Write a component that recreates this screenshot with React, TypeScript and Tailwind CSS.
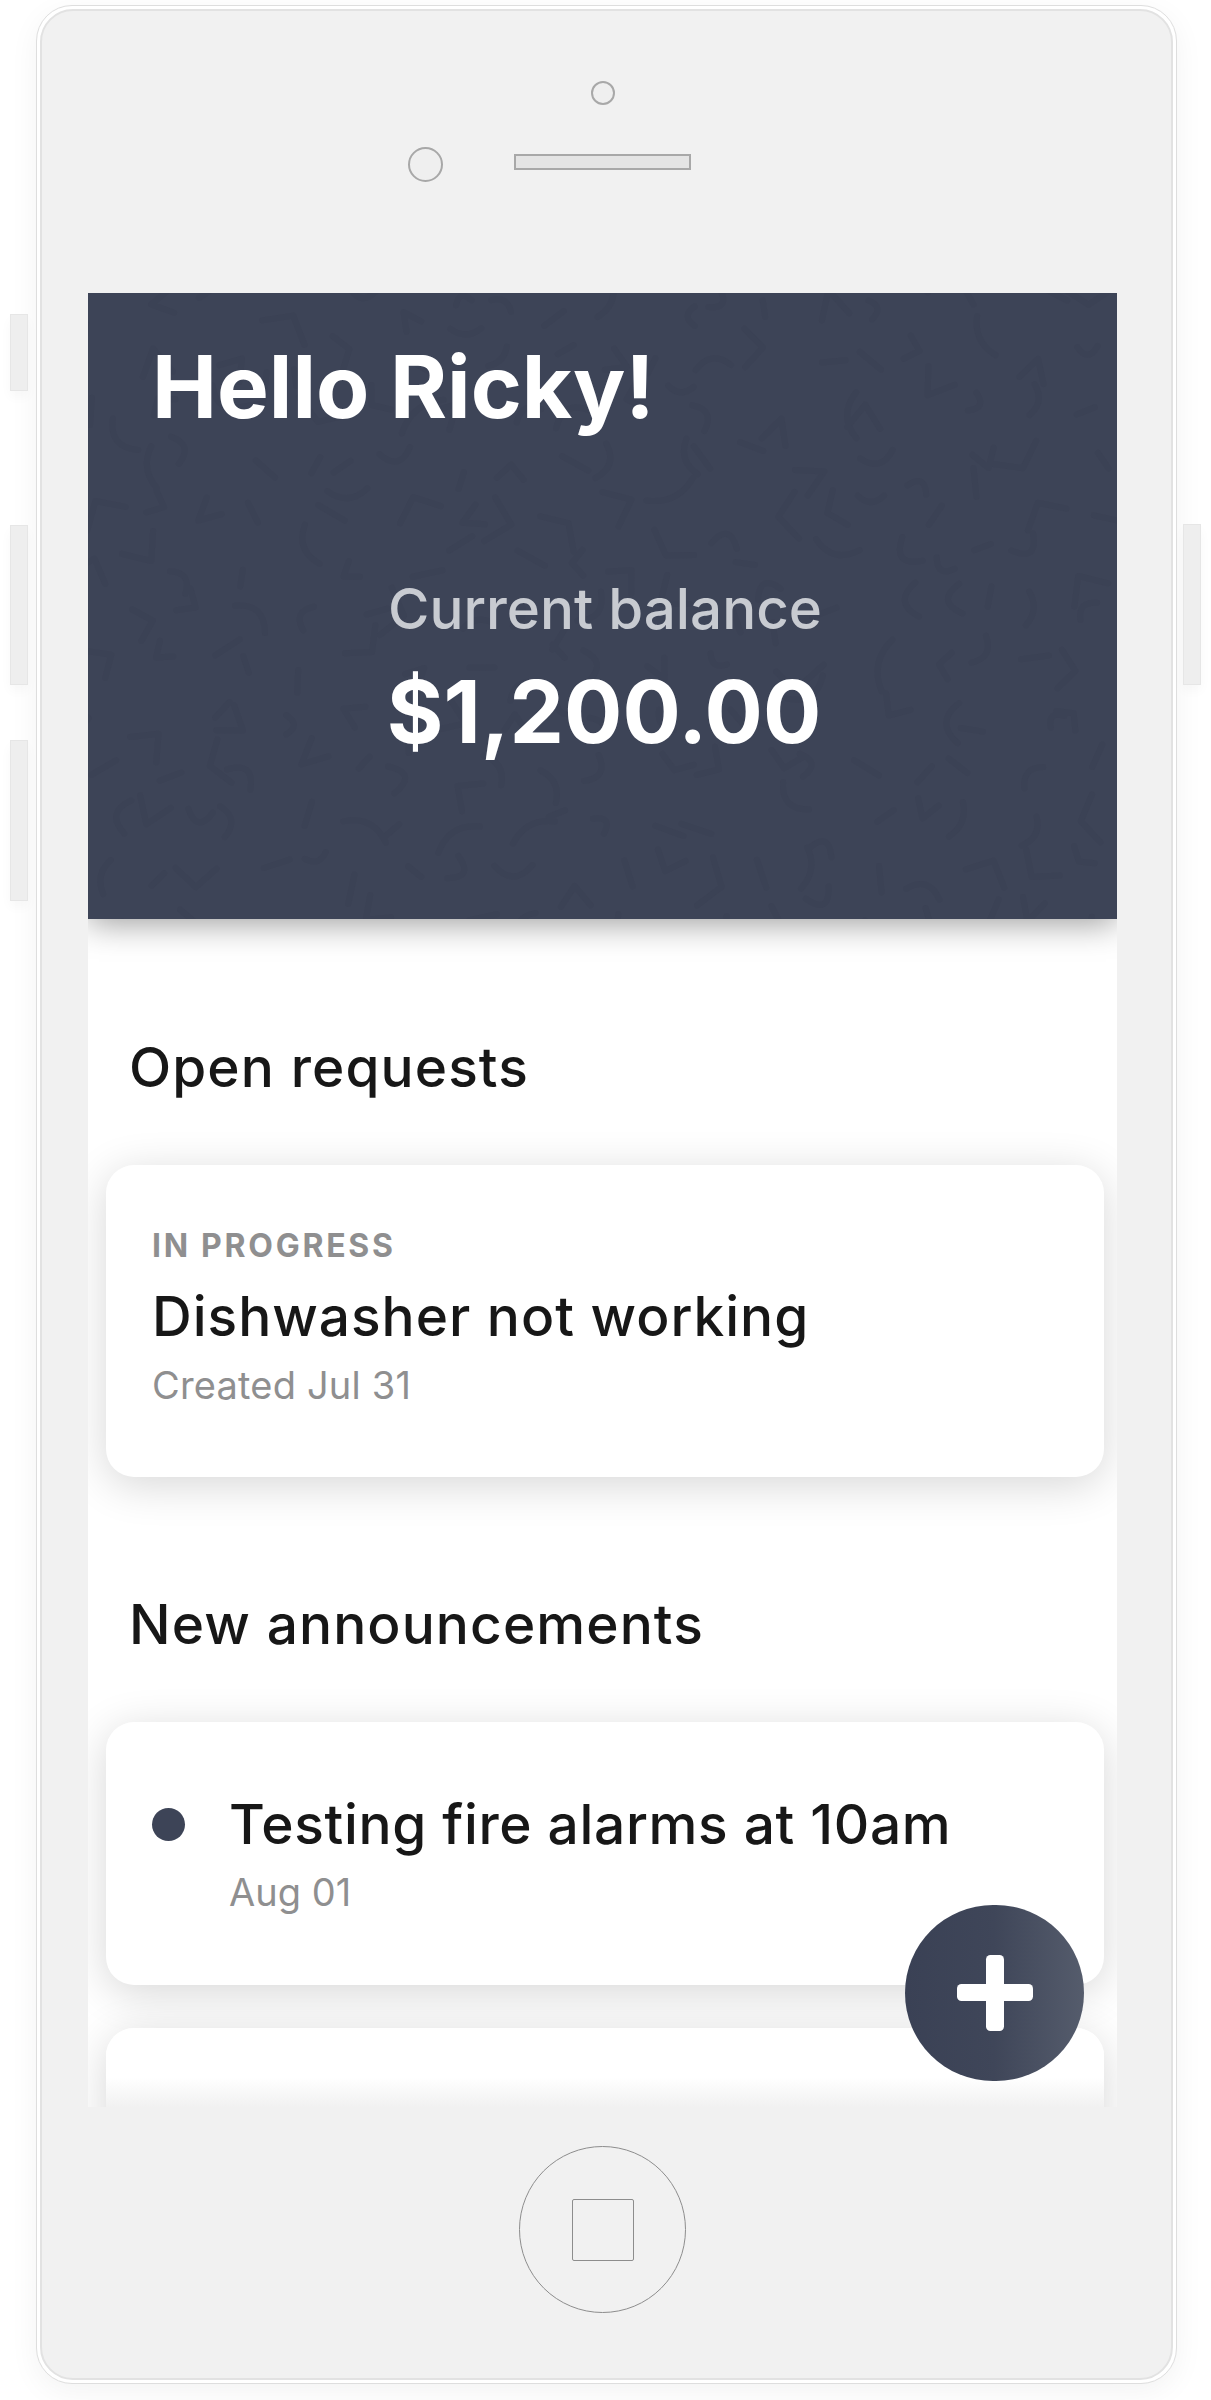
import React from "react";

function Squiggles() {
  let seed = 17;
  const r = () => {
    seed = (seed * 16807) % 2147483647;
    return seed / 2147483647;
  };
  const shapes: string[] = [];
  for (let y = 10; y < 640; y += 52) {
    for (let x = 10; x < 1040; x += 52) {
      const px = x + r() * 30 - 15;
      const py = y + r() * 30 - 15;
      const a = r() * Math.PI * 2;
      const l = 16 + r() * 16;
      const b = a + (r() > 0.5 ? 1 : -1) * (0.9 + r() * 1.1);
      const x1 = px + Math.cos(a) * l;
      const y1 = py + Math.sin(a) * l;
      const x2 = px + Math.cos(b) * l;
      const y2 = py + Math.sin(b) * l;
      const k = r();
      if (k < 0.35) shapes.push(`M${x1.toFixed(1)} ${y1.toFixed(1)}L${px.toFixed(1)} ${py.toFixed(1)}`);
      else if (k < 0.7) shapes.push(`M${x1.toFixed(1)} ${y1.toFixed(1)}L${px.toFixed(1)} ${py.toFixed(1)}L${x2.toFixed(1)} ${y2.toFixed(1)}`);
      else shapes.push(`M${x1.toFixed(1)} ${y1.toFixed(1)}Q${px.toFixed(1)} ${py.toFixed(1)} ${x2.toFixed(1)} ${y2.toFixed(1)}`);
    }
  }
  return (
    <svg className="absolute inset-0 h-full w-full" viewBox="0 0 1029 626" fill="none" aria-hidden="true">
      <path d={shapes.join("")} stroke="#363c4f" strokeOpacity="0.25" strokeWidth="6" strokeLinecap="round" strokeLinejoin="round" />
    </svg>
  );
}

function SideButton({ className }: { className: string }) {
  return <div className={`absolute w-[18px] border border-[#e6e6e6] bg-[#eeeeee] shadow-[0_6px_12px_rgba(0,0,0,0.03)] ${className}`} />;
}

const cardShadow = "shadow-[0_8px_44px_rgba(0,0,0,0.16)]";

export default function App() {
  return (
    <div className="relative h-[2400px] w-[1211px] overflow-hidden bg-white pt-[5px] pl-[36px] [font-family:Inter,'Open_Sans',sans-serif]">
      <SideButton className="top-[314px] left-[10px] h-[77px]" />
      <SideButton className="top-[525px] left-[10px] h-[160px]" />
      <SideButton className="top-[740px] left-[10px] h-[161px]" />
      <SideButton className="top-[524px] left-[1183px] h-[161px]" />

      <div className="h-[2379px] w-[1141px] rounded-[36px] border border-[#dedede] bg-white p-[3px] shadow-[0_8px_30px_rgba(0,0,0,0.05)]">
        <div className="flex h-full flex-col items-center rounded-[33px] border-2 border-[#e2e2e2] bg-[#f1f1f1] pr-[8px]">
          {/* top of device */}
          <div className="flex h-[282px] w-full shrink-0 flex-col items-center pt-[70px]">
            <div className="h-[24px] w-[24px] rounded-full border-2 border-[#a8a8a8] bg-[#efefef]" />
            <div className="mt-[42px] flex w-[389px] items-start gap-[71px]">
              <div className="h-[35px] w-[35px] shrink-0 rounded-full border-2 border-[#a8a8a8] bg-[#efefef]" />
              <div className="mt-[7px] h-[16px] w-[177px] shrink-0 border-2 border-[#a8a8a8] bg-[#e4e4e4]" />
            </div>
          </div>

          {/* screen */}
          <div className="relative h-[1814px] w-[1029px] shrink-0 overflow-hidden bg-white">
            <header className="relative z-10 h-[626px] bg-[#3d4457] shadow-[0_4px_32px_rgba(0,0,0,0.4)]">
              <Squiggles />
              <div className="relative">
                <h1 className="pt-[49px] pl-[64px] text-[87px] leading-[90px] font-bold text-white">Hello Ricky!</h1>
                <p className="mt-[145px] pl-[5px] text-center text-[56.5px] leading-[64px] font-medium text-[#c8cbd1]">Current balance</p>
                <p className="mt-[21px] pl-[3px] text-center text-[86.5px] leading-[100px] font-bold text-white">$1,200.00</p>
              </div>
            </header>

            <main className="pr-[13px] pl-[18px]">
              <h2 className="pt-[114px] pl-[23px] text-[55px] leading-[68px] font-medium tracking-[0.02em] text-[#171717]">Open requests</h2>
              <section className={`mt-[64px] h-[312px] rounded-[28px] bg-white pt-[58px] pl-[46px] ${cardShadow}`}>
                <p className="text-[32px] leading-[46px] font-bold tracking-[0.085em] text-[#8f8f90]">IN PROGRESS</p>
                <p className="mt-[12px] text-[55px] leading-[70px] font-medium tracking-[0.018em] text-[#171717]">Dishwasher not working</p>
                <p className="mt-[10px] text-[38px] leading-[48px] tracking-[0.005em] text-[#8f8f90]">Created Jul 31</p>
              </section>

              <h2 className="relative pt-[113px] pl-[23px] text-[55px] leading-[68px] font-medium tracking-[0.02em] text-[#171717]">New announcements</h2>
              <section className={`mt-[64px] flex h-[263px] rounded-[28px] bg-white pt-[67px] pl-[46px] ${cardShadow}`}>
                <div className="mt-[19px] h-[33px] w-[33px] shrink-0 rounded-full bg-[#3d4457]" />
                <div className="ml-[44px]">
                  <p className="text-[55px] leading-[70px] font-medium tracking-[0.012em] text-[#171717]">Testing fire alarms at 10am</p>
                  <p className="mt-[9px] text-[38px] leading-[48px] text-[#8f8f90]">Aug 01</p>
                </div>
              </section>
              <section className={`mt-[43px] h-[120px] rounded-t-[28px] bg-[linear-gradient(to_bottom,#ffffff_0,#ffffff_50px,#f1f1f1_79px)] ${cardShadow}`} />
            </main>

            <button className="absolute right-[33px] bottom-[26px] z-20 flex h-[176px] w-[179px] items-center justify-center rounded-full bg-[linear-gradient(to_right,#3a4155,#3f4659_50%,#555c6c)]" aria-label="Add">
              <svg width="76" height="76" viewBox="0 0 76 76" fill="#ffffff" aria-hidden="true">
                <rect x="29" y="0" width="18" height="76" rx="4.5" />
                <rect x="0" y="29" width="76" height="17" rx="4.5" />
              </svg>
            </button>
          </div>

          {/* home button */}
          <div className="mt-[39px] flex h-[167px] w-[167px] shrink-0 items-center justify-center rounded-full border-[1.5px] border-[#8d8d8d]">
            <div className="h-[62px] w-[62px] rounded-[2px] border-[1.5px] border-[#8d8d8d]" />
          </div>
        </div>
      </div>
    </div>
  );
}
